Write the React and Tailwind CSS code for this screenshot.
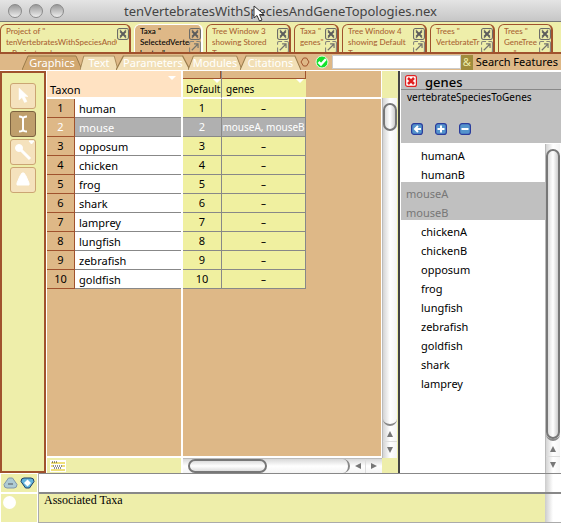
import React, { useState } from "react";

const projectTabs = [
  { lines: ["Project of \"", "tenVertebratesWithSpeciesAndG", "   Project and"], width: "w-[131px]", text: "w-[113px]", popOut: false },
  { lines: ["Taxa \"", "SelectedVerte", "brates\""], width: "w-[69px]", text: "w-[49px]", popOut: true, active: true },
  { lines: ["Tree Window 3", "showing Stored", "Trees"], width: "w-[85px]", text: "w-[62px]", popOut: true },
  { lines: ["Taxa \"", "genes\"", ""], width: "w-[45px]", text: "w-[26px]", popOut: true },
  { lines: ["Tree Window 4", "showing Default", "Trees"], width: "w-[85px]", text: "w-[62px]", popOut: true },
  { lines: ["Trees \"", "VertebrateTr", "   ees"], width: "w-[65px]", text: "w-[45px]", popOut: true },
  { lines: ["Trees \"", "GeneTree", "   s\""], width: "w-[55px]", text: "w-[35px]", popOut: true },
];

const viewTabs = [
  { name: "Graphics", width: "w-[60px]", active: true },
  { name: "Text", width: "w-[38px]" },
  { name: "Parameters", width: "w-[74px]" },
  { name: "Modules", width: "w-[54px]" },
  { name: "Citations", width: "w-[61px]" },
];

const taxa = ["human", "mouse", "opposum", "chicken", "frog", "shark", "lamprey", "lungfish", "zebrafish", "goldfish"];
const genes = ["–", "mouseA, mouseB", "–", "–", "–", "–", "–", "–", "–", "–"];
const geneTaxa = ["humanA", "humanB", "mouseA", "mouseB", "chickenA", "chickenB", "opposum", "frog", "lungfish", "zebrafish", "goldfish", "shark", "lamprey"];

function CloseIcon() {
  return (
    <svg viewBox="0 0 13 13" className="block size-3" aria-hidden="true">
      <rect x="0.6" y="0.6" width="11.8" height="11.8" rx="2" fill="none" stroke="#6c6c68" strokeWidth="1.2" />
      <path d="M3.500 3.500L9.500 9.500M9.500 3.500L3.500 9.500" stroke="#5c5c5c" strokeWidth="2.200" />
      <path d="M3 2.500H4.500M8.500 2.500H10M3 10.500H4.500M8.500 10.500H10" stroke="#5c5c5c" strokeWidth="1" />
    </svg>
  );
}

function PopOutIcon() {
  return (
    <svg viewBox="0 0 13 13" className="block size-3" aria-hidden="true">
      <path d="M5.500 0.600H2Q0.600 0.600 0.600 2V4M0.600 7V11Q0.600 12.400 2 12.400H4M7 12.400H11Q12.400 12.400 12.400 11V2Q12.400 0.600 11 0.600H8" fill="none" stroke="#85857c" strokeWidth="1.200" />
      <path d="M3 10L9.500 3.500M5.500 3.200H9.800V7.500" fill="none" stroke="#74746e" strokeWidth="1.300" />
    </svg>
  );
}

function ProjectTab({ tab }) {
  return (
    <div
      className={`flex h-[28px] shrink-0 justify-between overflow-hidden rounded-t-[6px] border border-b-0 border-r-2 pl-[5px] pt-px ${tab.width} ${
        tab.active ? "border-white bg-[#deb887] text-black" : "border-[#a0522d] bg-[#eeeeaa] text-[#aa6434]"
      }`}
    >
      <button type="button" className={`overflow-hidden whitespace-pre text-left font-['Lato','Noto_Sans',sans-serif] text-[8px] font-medium leading-[11px] ${tab.text}`}>
        {tab.lines.map((line, i) => (
          <span key={i} className="block h-[11px]">{line}</span>
        ))}
      </button>
      <div className="flex shrink-0 flex-col gap-px pt-[2px]">
        <button type="button" aria-label="Close tab"><CloseIcon /></button>
        {tab.popOut && <button type="button" aria-label="Pop out tab"><PopOutIcon /></button>}
      </div>
    </div>
  );
}

function ViewTab({ tab }) {
  return (
    <button type="button" className={`relative -mr-[2px] flex h-[15px] shrink-0 justify-center whitespace-nowrap text-[11px] leading-[16px] text-white ${tab.width}`}>
      <svg viewBox="0 0 60 15" preserveAspectRatio="none" className="absolute inset-0 size-full" aria-hidden="true">
        <path d="M0 15L6 1Q6.500 0.500 7 0.500H53Q53.500 0.500 54 1L60 15Z" fill={tab.active ? "#d2a870" : "#f2dfb6"} />
        <path d="M0 15L6 1H54L60 15" fill="none" stroke="#9a7c4c" />
      </svg>
      <span className="relative">{tab.name}</span>
    </button>
  );
}

function Tool({ label, active, children }) {
  return (
    <button
      type="button"
      aria-label={label}
      className={`flex size-[26px] items-center justify-center rounded-[3px] border ${
        active ? "border-[#7d6340] bg-[#bf9f6c]" : "border-[#cba573] bg-[#f5e2bd]"
      }`}
    >
      <svg viewBox="0 0 24 24" className="size-6" fill="white" stroke="white" aria-hidden="true">{children}</svg>
    </button>
  );
}

function Arrow({ dir }) {
  const shapes = { up: "M4 1L7 7H1Z", down: "M4 7L7 1H1Z", left: "M1 4L7 1V7Z", right: "M7 4L1 1V7Z" };
  return (
    <svg viewBox="0 0 8 8" className="size-2" aria-hidden="true"><path d={shapes[dir]} fill="#777" /></svg>
  );
}

function VerticalScroll({ thumb }) {
  return (
    <div className="flex w-[15px] flex-1 flex-col border-l border-[#bbb] bg-linear-to-r from-[#d4d4d4] via-white to-[#f4f4f4]">
      <div className="flex min-h-0 flex-1 flex-col rounded-b-full border-b-2 border-[#888] pt-[5px]">
        <div className={`w-[14px] rounded-full border-2 border-[#777] bg-linear-to-r from-[#ddd] via-white to-[#ccc] ${thumb}`} />
      </div>
      <button type="button" aria-label="Scroll up" className="flex h-4 shrink-0 items-center justify-center border-b border-[#ddd]"><Arrow dir="up" /></button>
      <button type="button" aria-label="Scroll down" className="flex h-4 shrink-0 items-center justify-center"><Arrow dir="down" /></button>
    </div>
  );
}

function HeaderMark({ className }) {
  return <svg viewBox="0 0 8 4" className={`h-1 w-2 ${className}`} aria-hidden="true"><path d="M0 0H8L4 4Z" fill="white" /></svg>;
}

function SquareButton({ label, path }) {
  return (
    <button type="button" aria-label={label}>
      <svg viewBox="0 0 12 12" className="block size-3" aria-hidden="true">
        <rect x="0.600" y="0.600" width="10.800" height="10.800" rx="2.500" fill="#5494cc" stroke="#2a3c9c" strokeWidth="1.200" />
        <path d={path} fill="none" stroke="white" strokeWidth="2" />
      </svg>
    </button>
  );
}

export default function App() {
  const [query, setQuery] = useState("");
  const [command, setCommand] = useState("");
  return (
    <div className="flex min-h-screen flex-col overflow-hidden bg-white font-['Noto_Sans','Open_Sans',sans-serif] text-[11px] text-black">
      <header className="relative flex h-[22px] items-center justify-center border-b border-[#777] bg-linear-to-b from-[#e4e4e4] to-[#c6c6c6]">
        <div className="absolute left-2 top-1 flex gap-[7px]">
          {["Close", "Minimize", "Zoom"].map((name) => (
            <button key={name} type="button" aria-label={name} className="size-[14px] rounded-full border border-[#8a8a8a] bg-linear-to-b from-[#999] to-[#eee]" />
          ))}
        </div>
        <h1 className="whitespace-nowrap text-[13px] leading-[20px] text-[#444]">tenVertebratesWithSpeciesAndGeneTopologies.nex</h1>
        <svg viewBox="0 0 12 18" className="absolute left-[253px] top-[5px] h-[18px] w-3" aria-hidden="true">
          <path d="M1 1V13L4 10.500L6.500 16L9 15L6.500 9.500H11Z" fill="white" stroke="#333" />
        </svg>
      </header>

      <nav className="flex h-8 items-start gap-[3px] overflow-hidden border-b-2 border-[#a0522d] bg-[#eeeeaa] pt-[2px]">
        {projectTabs.map((tab, i) => <ProjectTab key={i} tab={tab} />)}
      </nav>

      <div className="flex h-[17px] items-end overflow-hidden border-b border-white bg-[#deb887] pl-[22px]">
        {viewTabs.map((tab) => <ViewTab key={tab.name} tab={tab} />)}
        <div className="flex h-full items-center gap-[5px] pl-px">
          <svg viewBox="0 0 10 10" className="size-[10px]" aria-hidden="true"><path d="M3.500 1H6.500L9 5L6.500 9H3.500L1 5Z" fill="none" stroke="#a0522d" /></svg>
          <svg viewBox="0 0 14 14" className="size-[14px]" aria-hidden="true">
            <circle cx="7" cy="7" r="6" fill="#14e22c" stroke="#eafbe0" />
            <path d="M3.500 7L6 9.500L11 4" fill="none" stroke="white" strokeWidth="2.500" />
          </svg>
        </div>
        <label htmlFor="search" className="order-last flex h-full items-center gap-[3px] whitespace-nowrap pr-[3px]">
          <span className="flex h-[15px] w-3 items-center justify-center bg-[#a08c3c] text-[#eeeeaa]">&amp;</span>
          <span>Search Features</span>
        </label>
        <input id="search" value={query} onChange={(e) => setQuery(e.target.value)} className="mb-px ml-[3px] h-[14px] min-w-0 flex-1 border border-[#ccc] bg-white px-1 outline-none" />
      </div>

      <main className="flex min-h-[402px] flex-1">
        <aside className="flex w-[46px] shrink-0 flex-col items-center gap-[2px] border-2 border-[#a0522d] bg-[#eeeeaa] pt-[10px]">
          <Tool label="Arrow"><path d="M8 4V16L11 13.500L13.500 18.500L16 17.500L13.500 12.500H17Z" strokeWidth="0.500" /></Tool>
          <Tool label="Edit text" active><path d="M8 4.500Q12 4.500 12 7Q12 4.500 16 4.500M12 6V18M8 19.500Q12 19.500 12 17Q12 19.500 16 19.500" fill="none" strokeWidth="2" /></Tool>
          <Tool label="Magic wand"><circle cx="8" cy="8" r="3.500" /><path d="M9 9L19 19" strokeWidth="3" /><path d="M18 1H23L20.500 4Z" /></Tool>
          <Tool label="Fill"><path d="M11 5H13L15 8L18 15V17H6V15L9 8Z" strokeWidth="1" /></Tool>
        </aside>

        <section className="ml-px flex w-[134px] shrink-0 flex-col bg-[#deb887]">
          <table className="w-full table-fixed border-separate border-spacing-0">
            <colgroup>
              <col className="w-[28px]" />
              <col />
            </colgroup>
            <thead>
              <tr>
                <th colSpan="2" className="h-[28px] border-b-2 border-white bg-[#ffe2c2] p-0 align-top font-normal">
                  <div className="flex h-[26px] items-end justify-between pl-[3px] pr-[5px]">
                    <span className="leading-[15px]">Taxon</span>
                    <HeaderMark className="mb-[17px]" />
                  </div>
                </th>
              </tr>
            </thead>
            <tbody>
              {taxa.map((name, i) => (
                <tr key={name}>
                  <th className={`h-[19px] border-b border-r border-[#a0522d] bg-[#deb887] p-0 text-center font-normal leading-[16px] ${i === 1 ? "text-white" : ""}`}>{i + 1}</th>
                  <td className={`h-[19px] border-b border-[#888] p-0 pl-[4px] pt-[2px] leading-[16px] ${i === 1 ? "bg-[#b0b0b0] text-white" : "bg-white"}`}>{name}</td>
                </tr>
              ))}
            </tbody>
          </table>
          <div className="flex-1 border-b-2 border-white" />
          <div className="flex h-[15px] items-center bg-[#eeeeaa] pl-[3px]">
            <svg viewBox="0 0 16 12" className="h-3 w-4" aria-hidden="true">
              <rect width="16" height="12" fill="white" /><path d="M1 3H15M1 10H15M1 6H3M12 6H15" stroke="#efdf78" strokeWidth="2" />
              <path d="M2 2H8M3 6H12M4 8H11" stroke="#222" strokeDasharray="1 1" />
            </svg>
          </div>
        </section>

        <section className="flex min-w-0 flex-1 flex-col border-l-2 border-white bg-[#eeeeaa]">
          <div className="flex min-h-0 flex-1">
            <div className="min-w-0 flex-1 border-b-2 border-r border-white bg-[#deb887]">
              <table className="w-full table-fixed border-separate border-spacing-0">
                <colgroup>
                  <col className="w-[39px]" />
                  <col className="w-[84px]" />
                  <col />
                </colgroup>
                <thead>
                  <tr className="text-left text-[10px]">
                    <th className="h-[28px] border-b-2 border-r border-b-white border-r-[#888] bg-[#f0f0a0] p-0 align-top font-normal">
                      <div className="h-2 border-b border-r border-[#a0522d] bg-[#deb887]" />
                      <HeaderMark className="ml-[30px]" />
                      <div className="-mt-px pl-[3px] leading-[14px]">Default</div>
                    </th>
                    <th className="h-[28px] border-b-2 border-white bg-[#f0f0a0] p-0 align-top font-normal">
                      <div className="h-2 border-b border-r border-[#a0522d] bg-[#deb887]" />
                      <HeaderMark className="ml-[74px]" />
                      <div className="-mt-px pl-[4px] leading-[14px]">genes</div>
                    </th>
                    <td className="border-b-2 border-white p-0" />
                  </tr>
                </thead>
                <tbody>
                  {genes.map((gene, i) => {
                    const fill = i === 1 ? "bg-[#b0b0b0] text-white" : "bg-[#f0f0a0]";
                    return (
                      <tr key={i}>
                        <td className={`h-[19px] border-b border-r border-[#888] p-0 text-center leading-[16px] ${fill}`}>{i + 1}</td>
                        <td className={`h-[19px] whitespace-nowrap border-b border-r border-[#888] p-0 text-center text-[10px] leading-[16px] ${fill}`}>{gene}</td>
                      </tr>
                    );
                  })}
                </tbody>
              </table>
            </div>
            <div className="mr-px flex flex-col pt-[27px]"><VerticalScroll thumb="h-7" /></div>
          </div>
          <div className="mr-4 flex h-[15px] border-t border-[#bbb] bg-linear-to-b from-[#d8d8d8] via-white to-[#f4f4f4]">
            <div className="min-w-0 flex-1 rounded-r-full border-r-2 border-[#888] pl-[5px]">
              <div className="h-[14px] w-[79px] rounded-full border-2 border-[#777] bg-linear-to-b from-[#ddd] via-white to-[#ddd]" />
            </div>
            <button type="button" aria-label="Scroll left" className="flex w-4 items-center justify-center border-r border-[#ddd]"><Arrow dir="left" /></button>
            <button type="button" aria-label="Scroll right" className="flex w-4 items-center justify-center"><Arrow dir="right" /></button>
          </div>
        </section>

        <aside className="flex w-[163px] shrink-0 flex-col border-l-2 border-[#444] bg-white pl-px">
          <div className="mt-px flex h-[18px] items-center gap-2 border-b border-[#888] bg-[#c0c0c0] pl-[4px]">
            <button type="button" aria-label="Close panel">
              <svg viewBox="0 0 12 12" className="block size-3" aria-hidden="true">
                <rect x="0.600" y="0.600" width="10.800" height="10.800" rx="2" fill="#fff" stroke="#e02020" strokeWidth="1.200" /><path d="M3 3L9 9M9 3L3 9" stroke="#e02020" strokeWidth="2.500" />
              </svg>
            </button>
            <h2 className="pt-[3px] text-[13px] font-medium leading-[16px]">genes</h2>
          </div>
          <p className="h-[28px] bg-[#c0c0c0] pl-[6px] text-[10px] leading-[14px]">vertebrateSpeciesToGenes</p>
          <div className="flex h-[25px] items-center gap-3 bg-[#c0c0c0] pb-[3px] pl-[10px]">
            <SquareButton label="Assign" path="M10 6H4M7 3L4 6L7 9" />
            <SquareButton label="Add" path="M6 2.500V9.500M2.500 6H9.500" />
            <SquareButton label="Remove" path="M2.500 6H9.500" />
          </div>
          <div className="mt-px flex min-h-0 flex-1">
            <ul className="min-w-0 flex-1">
              {geneTaxa.map((name, i) => (
                <li key={name} className={`h-[19px] pt-[4px] leading-[15px] ${i === 2 || i === 3 ? "bg-[#c0c0c0] pl-[5px] text-[#777]" : "pl-[20px]"}`}>{name}</li>
              ))}
            </ul>
            <div className="mr-px flex flex-col"><VerticalScroll thumb="flex-1" /></div>
          </div>
        </aside>
      </main>

      <footer className="flex h-[50px]">
        <div className="flex w-[38px] shrink-0 flex-col gap-[2px] bg-white px-px pt-px">
          <div className="flex h-[18px] items-center gap-[2px] bg-[#eeeeaa] pl-[2px]">
            <button type="button" aria-label="Shrink"><svg viewBox="0 0 15 12" className="block h-3 w-[15px]" aria-hidden="true"><path d="M5.500 1H9.500L14 7.500Q14 11 11 11H4Q1 11 1 7.500Z" fill="#aecbd4" stroke="#8096ac" /><path d="M5 7H10" stroke="#7f8f98" strokeWidth="2" /></svg></button>
            <button type="button" aria-label="Grow"><svg viewBox="0 0 15 12" className="block h-3 w-[15px]" aria-hidden="true"><path d="M4 1H11Q14 1 14 4.500L9.500 11H5.500L1 4.500Q1 1 4 1Z" fill="#62b4dc" stroke="#1c3c64" /><path d="M7.500 2.500L11 6L7.500 9.500L4 6Z" fill="white" /></svg></button>
          </div>
          <div className="h-[28px] bg-[#eeeeaa] pl-[2px] pt-[2px]"><div className="size-[13px] rounded-full bg-white" /></div>
        </div>
        <div className="flex min-w-0 flex-1 flex-col border-l border-[#aaa]">
          <div className="flex h-[21px] shrink-0 border-y border-b-2 border-[#888]">
            <input aria-label="Command" value={command} onChange={(e) => setCommand(e.target.value)} className="min-w-0 flex-1 bg-white px-1 outline-none" />
            <div className="w-4 bg-linear-to-r from-[#ccc] via-white to-white" />
          </div>
          <div className="flex flex-1 border-b border-[#aaa] bg-[#eeeeaa]">
            <p className="flex-1 pl-[5px] font-['Liberation_Serif',serif] text-[12px] leading-[13px]">Associated Taxa</p>
            <div className="w-4 bg-linear-to-r from-[#ccc] via-white to-white" />
          </div>
        </div>
      </footer>
    </div>
  );
}
